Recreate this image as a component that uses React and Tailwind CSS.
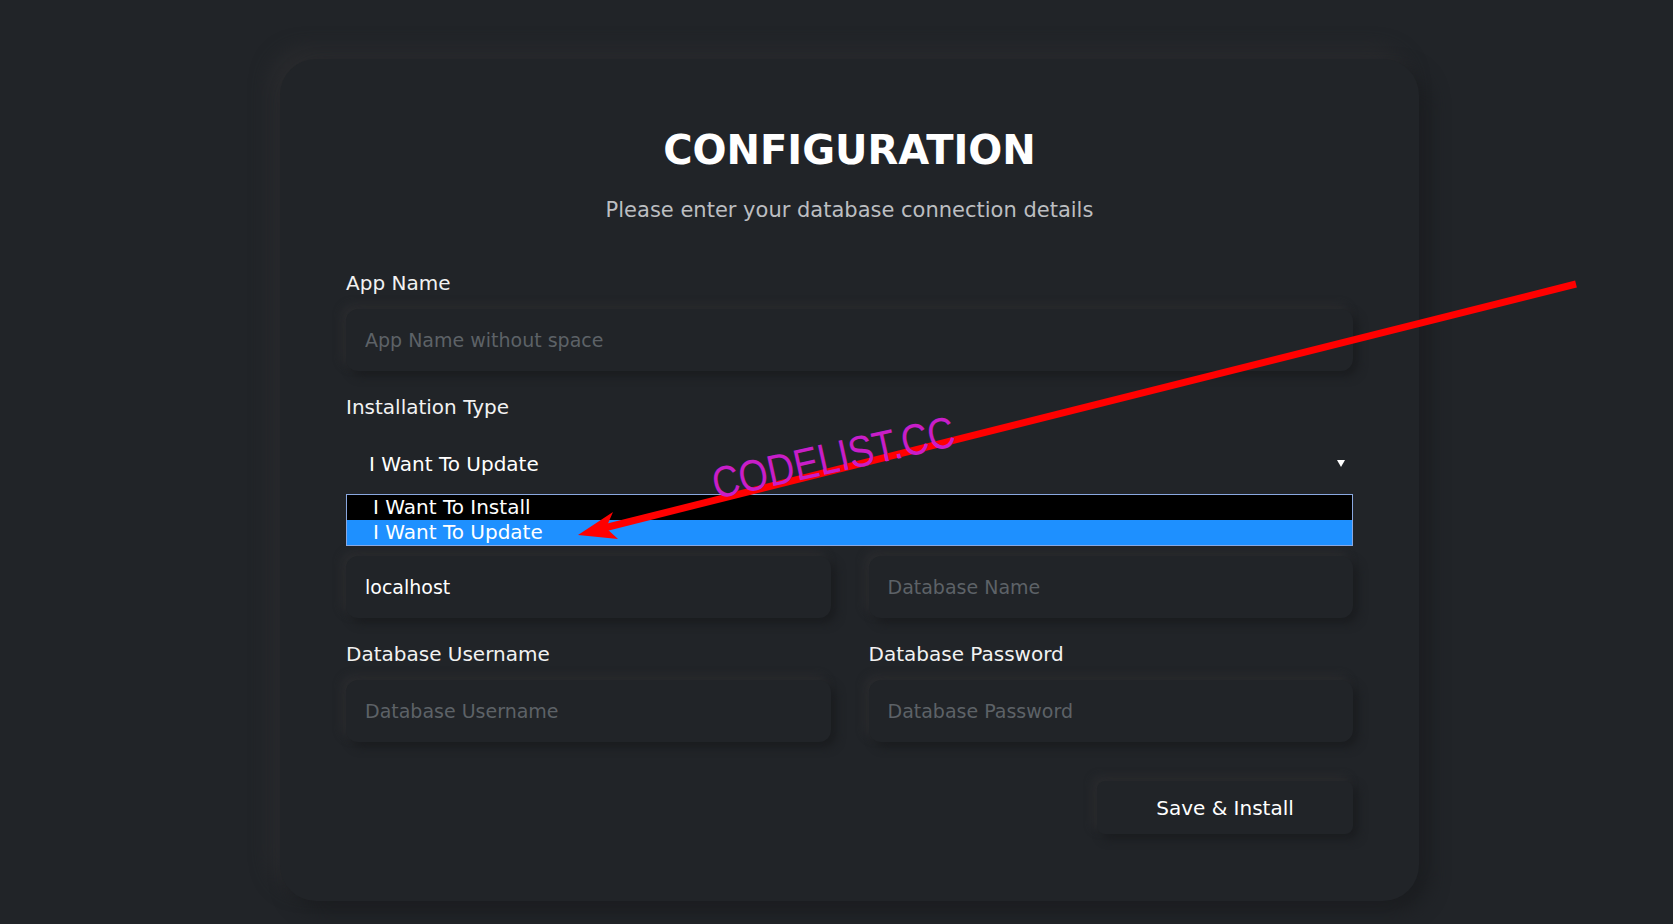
import React from 'react';

const field =
  'w-full h-[62px] rounded-[12px] bg-[#212428] px-[19px] text-[19px] text-white outline-none placeholder:text-[#5d6267] shadow-[5px_5px_10px_#1a1c1f,-4px_-4px_9px_#2b2c2f]';

const Label = ({ children }) => (
  <label className="block text-[20px] leading-[28px] text-[#f2f2f2] mb-[12px]">{children}</label>
);

const App = () => {
  return (
    <div className="relative min-h-screen bg-[#212428] pt-[59px] pb-[22px] font-['DejaVu_Sans',sans-serif] overflow-hidden">
      <div className="ml-[280px] w-[1139px] rounded-[36px] bg-[#212428] px-[66px] pt-[65px] pb-[67px] shadow-[10px_10px_19px_#1b1d20,-10px_-10px_19px_#2a2b2e]">
        <h1 className="text-center text-[40px] leading-[52px] font-bold text-white">CONFIGURATION</h1>
        <p className="mt-[20px] text-center text-[21px] leading-[29px] text-[#bcbec1]">
          Please enter your database connection details
        </p>

        <form className="mt-[44px] flex flex-col gap-[22px]" onSubmit={(e) => e.preventDefault()}>
          <div>
            <Label>App Name</Label>
            <input className={field} placeholder="App Name without space" />
          </div>

          <div className="relative">
            <Label>Installation Type</Label>
            <div className="flex h-[61px] items-center justify-between pl-[23px] pr-[8px] text-[20px] text-white">
              <span>I Want To Update</span>
              <svg width="8" height="7" viewBox="0 0 8 7">
                <path d="M0 0 H8 L4 7 Z" fill="#ffffff" />
              </svg>
            </div>
            {/* open native list */}
            <div className="absolute left-0 right-0 top-full z-10 border border-[#8aa8e0] text-[20px] text-white">
              <div className="h-[25px] leading-[25px] bg-black pl-[26px]">I Want To Install</div>
              <div className="h-[25px] leading-[25px] bg-[#1e90ff] pl-[26px]">I Want To Update</div>
            </div>
          </div>

          <div className="grid grid-cols-2 gap-[38px]">
            <div>
              <Label>Database Host</Label>
              <input className={field} defaultValue="localhost" />
            </div>
            <div>
              <Label>Database Name</Label>
              <input className={field} placeholder="Database Name" />
            </div>
          </div>

          <div className="grid grid-cols-2 gap-[38px]">
            <div>
              <Label>Database Username</Label>
              <input className={field} placeholder="Database Username" />
            </div>
            <div>
              <Label>Database Password</Label>
              <input className={field} type="password" placeholder="Database Password" />
            </div>
          </div>

          <div className="flex justify-end mt-[17px]">
            <button
              type="submit"
              className="w-[256px] h-[53px] rounded-[8px] bg-[#212428] text-[20px] text-white shadow-[5px_5px_10px_#1a1c1f,-4px_-4px_9px_#2b2c2f]"
            >
              Save &amp; Install
            </button>
          </div>
        </form>
      </div>

      {/* annotation arrow */}
      <svg className="pointer-events-none absolute left-0 top-0 z-20" width="1673" height="924">
        <line x1="1576" y1="284" x2="604" y2="528" stroke="#ff0000" strokeWidth="7" />
        <polygon points="578,535 613,512 606,528 618,539" fill="#ff0000" />
      </svg>

      <span className="pointer-events-none absolute z-30 left-[716px] top-[462px] whitespace-nowrap text-[44px] leading-none text-[#c81ec8] font-['Liberation_Sans',sans-serif] origin-[0_37px] [transform:rotate(-12.5deg)_scaleX(0.85)]">
        CODELIST.CC
      </span>
    </div>
  );
};

export default App;
